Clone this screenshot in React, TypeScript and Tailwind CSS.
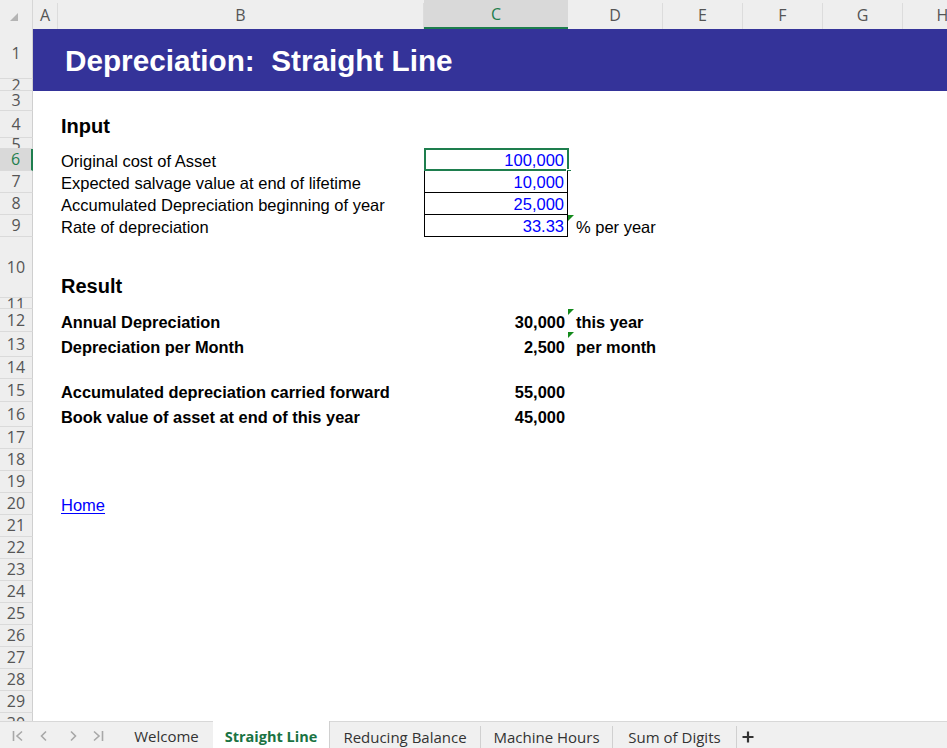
import React from 'react';

const ui = { fontFamily: '"Open Sans", "Noto Sans", sans-serif' };
const cell = { fontFamily: '"Liberation Sans", Arial, sans-serif' };

const cols = [
  { id: 'A', w: 'w-[25px]' },
  { id: 'B', w: 'w-[366px]' },
  { id: 'C', w: 'w-[144px]' },
  { id: 'D', w: 'w-[95px]' },
  { id: 'E', w: 'w-[80px]' },
  { id: 'F', w: 'w-[80px]' },
  { id: 'G', w: 'w-[80px]' },
  { id: 'H', w: 'w-[80px]' },
];

function ColumnHeader() {
  return (
    <div className="flex h-[29px] shrink-0 bg-[#eeeeee] text-[16px] text-[#555]" style={ui}>
      <div className="relative w-[33px] shrink-0 border-r border-[#d6d6d6]">
        <svg className="absolute left-[10px] top-[13px]" width="8" height="8" viewBox="0 0 8 8">
          <path d="M8 0 L8 8 L0 8 Z" fill="#b4b4b4" />
        </svg>
      </div>
      {cols.map((c) =>
        c.id === 'C' ? (
          <div
            key={c.id}
            className={`${c.w} shrink-0 flex items-center justify-center bg-[#d9d9d9] border-b-2 border-[#1e7e4e] text-[#1e7e4e]`}
          >
            {c.id}
          </div>
        ) : (
          <div
            key={c.id}
            className={`${c.w} shrink-0 flex items-center justify-center border-r border-[#dcdcdc] mt-[3px] pb-[3px]`}
          >
            {c.id}
          </div>
        )
      )}
    </div>
  );
}

function Row({
  n,
  h,
  sel,
  blue,
  top,
  children,
}: {
  n: number;
  h: string;
  sel?: boolean;
  blue?: boolean;
  top?: boolean;
  children?: React.ReactNode;
}) {
  return (
    <div className={`flex shrink-0 ${h}`}>
      <div
        className={`w-[33px] shrink-0 overflow-hidden flex justify-center border-b border-[#dadada] text-[16px] ${
          top ? 'items-start leading-[13px]' : 'items-center leading-[21px]'
        } ${
          sel
            ? 'bg-[#d9d9d9] text-[#1e7e4e] border-r-2 border-r-[#1e7e4e]'
            : 'bg-[#eeeeee] text-[#555] border-r border-r-[#cfcfcf]'
        }`}
        style={ui}
      >
        {n}
      </div>
      <div className={`relative flex flex-1 min-w-0 ${blue ? 'bg-[#343399]' : 'bg-white'}`} style={cell}>
        {children}
      </div>
    </div>
  );
}

function B({ children, className = '' }: { children?: React.ReactNode; className?: string }) {
  return (
    <>
      <div className="w-[25px] shrink-0" />
      <div className={`w-[366px] shrink-0 flex items-end whitespace-nowrap pl-[3px] pb-[2px] leading-none ${className}`}>
        {children}
      </div>
    </>
  );
}

function C({
  children,
  className = '',
}: {
  children?: React.ReactNode;
  className?: string;
}) {
  return (
    <div className={`w-[144px] shrink-0 flex items-end justify-end whitespace-nowrap pr-[3px] pb-[2px] leading-none ${className}`}>
      {children}
    </div>
  );
}

function D({ children, flag, className = '' }: { children?: React.ReactNode; flag?: boolean; className?: string }) {
  return (
    <div className={`relative w-[95px] shrink-0 flex items-end whitespace-nowrap pl-[8px] pb-[2px] leading-none ${className}`}>
      {flag && (
        <svg className="absolute left-0 top-0" width="6" height="6" viewBox="0 0 6 6">
          <path d="M0 0 L6 0 L0 6 Z" fill="#138a1c" />
        </svg>
      )}
      {children}
    </div>
  );
}

function NavIcon({ kind }: { kind: 'first' | 'prev' | 'next' | 'last' }) {
  const s = { stroke: '#a8a8a8', strokeWidth: 1.6, fill: 'none' };
  return (
    <svg width="14" height="14" viewBox="0 0 14 14">
      {kind === 'first' && (
        <>
          <path d="M2.5 2 V12" {...s} />
          <path d="M11 2.5 L6 7 L11 11.5" {...s} />
        </>
      )}
      {kind === 'prev' && <path d="M9 2.5 L4.5 7 L9 11.5" {...s} />}
      {kind === 'next' && <path d="M5 2.5 L9.5 7 L5 11.5" {...s} />}
      {kind === 'last' && (
        <>
          <path d="M3 2.5 L8 7 L3 11.5" {...s} />
          <path d="M11.5 2 V12" {...s} />
        </>
      )}
    </svg>
  );
}

function TabBar() {
  return (
    <div className="flex h-[27px] shrink-0 bg-[#f0f0f0] border-t border-[#d8d8d8] text-[15px] text-[#333]" style={ui}>
      <div className="w-[120px] shrink-0 flex items-center pl-[11px] pt-[2px]">
        <div className="w-[26px]"><NavIcon kind="first" /></div>
        <div className="w-[29px]"><NavIcon kind="prev" /></div>
        <div className="w-[25px]"><NavIcon kind="next" /></div>
        <div><NavIcon kind="last" /></div>
      </div>
      <div className="w-[93px] shrink-0 flex items-center justify-center pt-[3px]">Welcome</div>
      <div className="w-[117px] shrink-0 -mt-px flex items-center justify-center bg-white border-r border-[#d0d0d0] pt-[4px] font-bold text-[14.5px] text-[#1a7343]">
        Straight Line
      </div>
      <div className="w-[151px] shrink-0 flex items-center justify-center border-r border-[#d0d0d0] mt-[4px]">
        Reducing Balance
      </div>
      <div className="w-[132px] shrink-0 flex items-center justify-center border-r border-[#d0d0d0] mt-[4px]">
        Machine Hours
      </div>
      <div className="w-[124px] shrink-0 flex items-center justify-center border-r border-[#d0d0d0] mt-[4px]">
        Sum of Digits
      </div>
      <div className="flex items-center pl-[4px] pt-[4px]">
        <svg width="14" height="14" viewBox="0 0 14 14">
          <path d="M7 1.5 V12.5 M1.5 7 H12.5" stroke="#333" strokeWidth="2.2" />
        </svg>
      </div>
    </div>
  );
}

export default function App() {
  const filler = [17, 18, 19, 21, 22, 23, 24, 25, 26, 27, 28, 29, 30];
  return (
    <div className="flex h-[748px] w-[947px] flex-col overflow-hidden bg-white">
      <ColumnHeader />
      <div className="flex-1 min-h-0 overflow-hidden flex flex-col">
        <Row n={1} h="h-[50px]" blue>
          <B className="pl-[7px] pb-[3px] text-[29.7px] font-bold text-white">Depreciation:&nbsp; Straight Line</B>
        </Row>
        <Row n={2} h="h-[12px]" blue top />
        <Row n={3} h="h-[20px]" />
        <Row n={4} h="h-[27px]">
          <B className="text-[20px] font-bold">Input</B>
        </Row>
        <Row n={5} h="h-[11px]" top />
        <Row n={6} h="h-[22px]" sel>
          <B className="text-[16.5px]">Original cost of Asset</B>
          <C className="relative text-[16.5px] text-[#0000ff] border border-black">
            100,000
            <div className="pointer-events-none absolute -left-px -top-[2px] -right-[2px] -bottom-px border-2 border-[#1e7e4e]" />
            <div className="absolute -right-[5px] -bottom-[5px] h-[6px] w-[6px] bg-[#1e7e4e] border border-white" />
          </C>
        </Row>
        <Row n={7} h="h-[22px]">
          <B className="text-[16.5px]">Expected salvage value at end of lifetime</B>
          <C className="text-[16.5px] text-[#0000ff] border border-t-0 border-black">10,000</C>
        </Row>
        <Row n={8} h="h-[22px]">
          <B className="text-[16.5px]">Accumulated Depreciation beginning of year</B>
          <C className="text-[16.5px] text-[#0000ff] border border-t-0 border-black">25,000</C>
        </Row>
        <Row n={9} h="h-[22px]">
          <B className="text-[16.5px]">Rate of depreciation</B>
          <C className="text-[16.5px] text-[#0000ff] border border-t-0 border-black">33.33</C>
          <D flag className="text-[16.5px]">% per year</D>
        </Row>
        <Row n={10} h="h-[61px]">
          <B className="text-[20px] font-bold">Result</B>
        </Row>
        <Row n={11} h="h-[11px]" top />
        <Row n={12} h="h-[23px]">
          <B className="text-[16.4px] font-bold">Annual Depreciation</B>
          <C className="text-[16.4px] font-bold">30,000</C>
          <D flag className="text-[16.4px] font-bold">this year</D>
        </Row>
        <Row n={13} h="h-[25px]">
          <B className="text-[16.4px] font-bold">Depreciation per Month</B>
          <C className="text-[16.4px] font-bold">2,500</C>
          <D flag className="text-[16.4px] font-bold">per month</D>
        </Row>
        <Row n={14} h="h-[22px]" />
        <Row n={15} h="h-[23px]">
          <B className="text-[16.4px] font-bold">Accumulated depreciation carried forward</B>
          <C className="text-[16.4px] font-bold">55,000</C>
        </Row>
        <Row n={16} h="h-[25px]">
          <B className="text-[16.4px] font-bold">Book value of asset at end of this year</B>
          <C className="text-[16.4px] font-bold">45,000</C>
        </Row>
        {filler.map((n) =>
          n === 21 ? (
            <React.Fragment key={n}>
              <Row n={20} h="h-[22px]">
                <B className="text-[16.5px] pb-[1px]">
                  <span className="text-[#0000ff] underline underline-offset-2">Home</span>
                </B>
              </Row>
              <Row n={21} h="h-[22px]" />
            </React.Fragment>
          ) : (
            <Row key={n} n={n} h="h-[22px]" />
          )
        )}
      </div>
      <TabBar />
    </div>
  );
}
